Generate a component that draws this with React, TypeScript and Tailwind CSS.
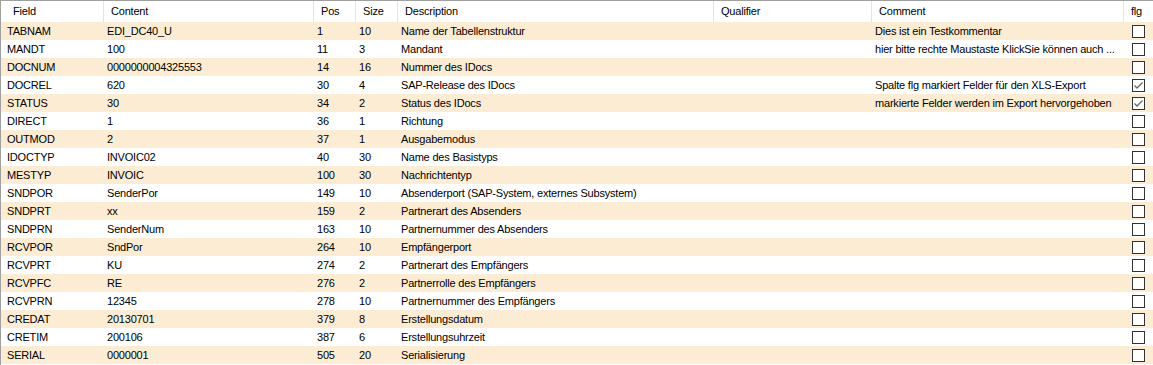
const columns = [
  { key: "field", label: "Field" },
  { key: "content", label: "Content" },
  { key: "pos", label: "Pos" },
  { key: "size", label: "Size" },
  { key: "desc", label: "Description" },
  { key: "qual", label: "Qualifier" },
  { key: "comment", label: "Comment" },
  { key: "flg", label: "flg" },
];

type Row = {
  field: string;
  content: string;
  pos: number;
  size: number;
  desc: string;
  comment?: string;
  flg?: boolean;
};

const rows: Row[] = [
  { field: "TABNAM", content: "EDI_DC40_U", pos: 1, size: 10, desc: "Name der Tabellenstruktur", comment: "Dies ist ein Testkommentar" },
  { field: "MANDT", content: "100", pos: 11, size: 3, desc: "Mandant", comment: "hier bitte rechte Maustaste KlickSie können auch ..." },
  { field: "DOCNUM", content: "0000000004325553", pos: 14, size: 16, desc: "Nummer des IDocs" },
  { field: "DOCREL", content: "620", pos: 30, size: 4, desc: "SAP-Release des IDocs", comment: "Spalte flg markiert Felder für den XLS-Export", flg: true },
  { field: "STATUS", content: "30", pos: 34, size: 2, desc: "Status des IDocs", comment: "markierte Felder werden im Export hervorgehoben", flg: true },
  { field: "DIRECT", content: "1", pos: 36, size: 1, desc: "Richtung" },
  { field: "OUTMOD", content: "2", pos: 37, size: 1, desc: "Ausgabemodus" },
  { field: "IDOCTYP", content: "INVOIC02", pos: 40, size: 30, desc: "Name des Basistyps" },
  { field: "MESTYP", content: "INVOIC", pos: 100, size: 30, desc: "Nachrichtentyp" },
  { field: "SNDPOR", content: "SenderPor", pos: 149, size: 10, desc: "Absenderport (SAP-System, externes Subsystem)" },
  { field: "SNDPRT", content: "xx", pos: 159, size: 2, desc: "Partnerart des Absenders" },
  { field: "SNDPRN", content: "SenderNum", pos: 163, size: 10, desc: "Partnernummer des Absenders" },
  { field: "RCVPOR", content: "SndPor", pos: 264, size: 10, desc: "Empfängerport" },
  { field: "RCVPRT", content: "KU", pos: 274, size: 2, desc: "Partnerart des Empfängers" },
  { field: "RCVPFC", content: "RE", pos: 276, size: 2, desc: "Partnerrolle des Empfängers" },
  { field: "RCVPRN", content: "12345", pos: 278, size: 10, desc: "Partnernummer des Empfängers" },
  { field: "CREDAT", content: "20130701", pos: 379, size: 8, desc: "Erstellungsdatum" },
  { field: "CRETIM", content: "200106", pos: 387, size: 6, desc: "Erstellungsuhrzeit" },
  { field: "SERIAL", content: "0000001", pos: 505, size: 20, desc: "Serialisierung" },
];

const grid = "grid grid-cols-[102px_210px_42px_42px_316px_158px_252px_30px]";

function CheckBox({ checked }: { checked?: boolean }) {
  return (
    <div className="w-[13px] h-[13px] border border-[#333] bg-white flex items-center justify-center">
      {checked && (
        <svg width="11" height="11" viewBox="0 0 11 11">
          <polyline points="1.5,5.5 4,8 9.5,2.5" fill="none" stroke="#666" strokeWidth="1.3" />
        </svg>
      )}
    </div>
  );
}

export default function App() {
  return (
    <div
      className="w-[1153px] h-[365px] overflow-hidden bg-white border-t border-l border-[#a0a0a0] text-[11px] tracking-[-0.2px] text-black"
      style={{ fontFamily: '"Liberation Sans", Arial, sans-serif' }}
    >
      <div className={`${grid} h-[21px] bg-white`}>
        {columns.map((c, i) => (
          <div
            key={c.key}
            className={`flex items-center ${i > 0 ? "border-l border-[#e3e3e3] pl-[7px]" : "pl-[12px]"}`}
          >
            {c.label}
          </div>
        ))}
      </div>
      {rows.map((r, i) => (
        <div
          key={r.field}
          className={`${grid} h-[18px] items-center ${i % 2 === 0 ? "bg-[#fdecd4]" : "bg-white"}`}
        >
          <div className="pl-[6px] whitespace-nowrap">{r.field}</div>
          <div className="pl-[4px] whitespace-nowrap">{r.content}</div>
          <div className="pl-[4px]">{r.pos}</div>
          <div className="pl-[4px]">{r.size}</div>
          <div className="pl-[4px] whitespace-nowrap">{r.desc}</div>
          <div />
          <div className="pl-[4px] whitespace-nowrap overflow-hidden">{r.comment}</div>
          <div className="flex justify-center">
            <CheckBox checked={r.flg} />
          </div>
        </div>
      ))}
    </div>
  );
}
